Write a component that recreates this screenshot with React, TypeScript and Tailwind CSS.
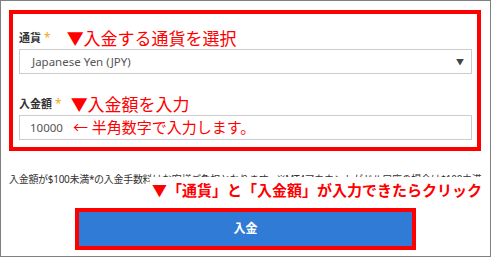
export default function App() {
  return (
    <div className="w-[491px] h-[257px] border border-[#808080] bg-white overflow-hidden flex flex-col font-['Noto_Sans','Noto_Sans_CJK_JP',sans-serif]">
      {/* annotated form */}
      <div className="ml-[8px] mt-[9px] w-[472px] h-[141px] border-4 border-[#ff0000] pl-[6px] pr-[5px] pt-[13px]">
        <div className="flex items-center h-[22px]">
          <span className="text-[11px] font-bold text-[#333]">通貨</span>
          <span className="text-[12px] text-[#f5a623] ml-[3px]">*</span>
          <span className="ml-[16px] text-[17px] text-[#ff0000] leading-none">▼入金する通貨を選択</span>
        </div>
        <div className="h-[25px] border border-[#cccccc] flex items-center justify-between pl-[12px] pr-[7px]">
          <span className="text-[11.5px] text-[#555]">Japanese Yen (JPY)</span>
          <span className="text-[8px] text-[#444]">▼</span>
        </div>

        <div className="flex items-center h-[22px] mt-[19px]">
          <span className="text-[11px] font-bold text-[#333]">入金額</span>
          <span className="text-[12px] text-[#f5a623] ml-[3px]">*</span>
          <span className="ml-[9px] text-[17px] text-[#ff0000] leading-none">▼入金額を入力</span>
        </div>
        <div className="h-[25px] border border-[#cccccc] flex items-center pl-[10px]">
          <span className="text-[11.5px] text-[#555]">10000</span>
          <span className="ml-[10px] text-[15px] text-[#ff0000]">← 半角数字で入力します。</span>
        </div>
      </div>

      <div className="mt-[21px] ml-[8px] text-[10px] leading-[14px] text-[#333] whitespace-nowrap tracking-[-0.3px]">
        入金額が$100未満*の入金手数料はお客様ご負担となります。※MT4アカウントがドル口座の場合は$100未満
      </div>
      <div className="self-end mr-[8px] -mt-[9px] bg-white pl-[2px] h-[26px] leading-[26px] text-[15px] font-bold text-[#ff0000] whitespace-nowrap relative">
        ▼「通貨」と「入金額」が入力できたらクリック
      </div>

      <div className="ml-[74px] mt-[5px] w-[341px] h-[42px] border-4 border-[#ff0000] bg-[#2f7bd6] flex items-center justify-center">
        <span className="text-[12px] font-bold text-white">入金</span>
      </div>
    </div>
  );
}
